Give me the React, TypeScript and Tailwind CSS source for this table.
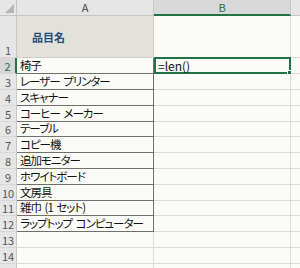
import React from "react";

const items = [
  "椅子",
  "レーザー プリンター",
  "スキャナー",
  "コーヒー メーカー",
  "テーブル",
  "コピー機",
  "追加モニター",
  "ホワイトボード",
  "文房具",
  "雑巾 (1 セット)",
  "ラップトップ コンピューター",
];

const heights = [16, 16, 16, 16, 15, 16, 16, 16, 16, 15, 16];

const font = {
  fontFamily: '"Noto Sans CJK JP", "Noto Sans", sans-serif',
};

function RowHead({ n, active }: { n?: number; active?: boolean }) {
  return (
    <div
      className={
        "w-[17px] shrink-0 flex items-end justify-center pb-[1px] text-[11px] leading-none border-b border-[#d8d8d8] " +
        (active
          ? "bg-[#d6d6d6] text-[#217346] border-r-2 border-r-[#217346]"
          : "bg-[#e6e6e6] text-[#555] border-r border-r-[#c6c6c6]")
      }
    >
      {n}
    </div>
  );
}

export default function App() {
  return (
    <div className="w-[300px] h-[268px] overflow-hidden bg-[#fbfbf7]" style={font}>
      {/* column headers */}
      <div className="flex h-[16px]">
        <div className="w-[17px] shrink-0 bg-[#e6e6e6] border-r border-b border-[#c6c6c6] relative">
          <svg width="9" height="9" className="absolute right-[2px] bottom-[2px]">
            <polygon points="9,0 9,9 0,9" fill="#b4b4b4" />
          </svg>
        </div>
        <div className="w-[137px] shrink-0 bg-[#e6e6e6] border-r border-b border-[#c6c6c6] flex items-center justify-center text-[11px] text-[#444]">
          A
        </div>
        <div className="w-[137px] shrink-0 bg-[#d9d9d9] border-r border-[#c6c6c6] border-b-2 border-b-[#217346] flex items-center justify-center text-[11px] text-[#217346]">
          B
        </div>
        <div className="flex-1 bg-[#e6e6e6] border-b border-[#c6c6c6]" />
      </div>

      {/* row 1 */}
      <div className="flex h-[42px]">
        <RowHead n={1} />
        <div className="w-[137px] shrink-0 bg-[#e3e1dc] border-r border-b border-[#d0cec8] flex items-center pl-[15px] pt-[2px] text-[11px] font-bold text-[#1f4e79]">
          品目名
        </div>
        <div className="w-[137px] shrink-0 border-r border-b border-[#dcdcdc]" />
        <div className="flex-1 border-b border-[#dcdcdc]" />
      </div>

      {/* data rows */}
      {items.map((t, i) => (
        <div key={t} className="flex" style={{ height: heights[i] }}>
          <RowHead n={i + 2} active={i === 0} />
          <div className="w-[137px] shrink-0 border-r border-b border-[#6f6f6f] flex items-center pl-[3px] text-[11.5px] text-[#111] whitespace-pre [font-feature-settings:'palt'] tracking-[-1px] [word-spacing:2px]">
            {t}
          </div>
          {i === 0 ? (
            <div className="w-[137px] shrink-0 relative border-2 border-[#217346] -mt-[1px] flex items-center pl-[2px] text-[12px] text-[#111]">
              =len()
              <div className="absolute -right-[3px] -bottom-[3px] w-[5px] h-[5px] bg-[#217346] border border-white" />
            </div>
          ) : (
            <div className="w-[137px] shrink-0 border-r border-b border-[#dcdcdc]" />
          )}
          <div className="flex-1 border-b border-[#dcdcdc]" />
        </div>
      ))}

      {/* empty rows */}
      {[13, 14, 0].map((n) => (
        <div key={n} className="flex h-[16px]">
          <RowHead n={n || undefined} />
          <div className="w-[137px] shrink-0 border-r border-b border-[#dcdcdc]" />
          <div className="w-[137px] shrink-0 border-r border-b border-[#dcdcdc]" />
          <div className="flex-1 border-b border-[#dcdcdc]" />
        </div>
      ))}
    </div>
  );
}
